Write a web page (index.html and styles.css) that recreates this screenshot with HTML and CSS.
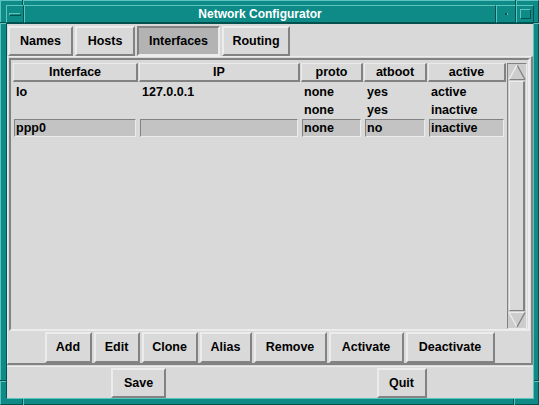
FILE: index.html
```html
<!DOCTYPE html>
<html>
<head>
<meta charset="utf-8">
<title>Network Configurator</title>
<link rel="stylesheet" href="styles.css">
</head>
<body>
<div class="window">
  <span class="mark vmark m-top-l"></span>
  <span class="mark vmark m-top-r"></span>
  <span class="mark vmark m-bot-l"></span>
  <span class="mark vmark m-bot-r"></span>
  <span class="mark hmark m-left-t"></span>
  <span class="mark hmark m-right-t"></span>
  <span class="mark hmark m-left-b"></span>
  <span class="mark hmark m-right-b"></span>

  <div class="titlebar">
    <div class="tb tb-menu"><span class="menu-bar"></span></div>
    <div class="tb tb-title">Network Configurator</div>
    <div class="tb tb-min"><span class="min-dot"></span></div>
    <div class="tb tb-max"><span class="max-sq"></span></div>
  </div>

  <div class="client">
    <div class="tabs">
      <div class="btn tab-names">Names</div>
      <div class="btn tab-hosts">Hosts</div>
      <div class="btn tab-ifaces selected">Interfaces</div>
      <div class="btn tab-routing">Routing</div>
    </div>

    <div class="panel">
      <div class="list-frame">
        <div class="table">
          <div class="th">Interface</div>
          <div class="th">IP</div>
          <div class="th">proto</div>
          <div class="th">atboot</div>
          <div class="th">active</div>

          <div class="td">lo</div>
          <div class="td">127.0.0.1</div>
          <div class="td">none</div>
          <div class="td">yes</div>
          <div class="td">active</div>

          <div class="td"></div>
          <div class="td"></div>
          <div class="td">none</div>
          <div class="td">yes</div>
          <div class="td">inactive</div>

          <div class="td field">ppp0</div>
          <div class="td field"></div>
          <div class="td field">none</div>
          <div class="td field">no</div>
          <div class="td field">inactive</div>
        </div>
        <div class="scrollbar">
          <svg class="arrow" width="18" height="17" viewBox="0 0 18 17">
            <line x1="1" y1="15.5" x2="17" y2="15.5" stroke="#828282" stroke-width="1"/>
            <line x1="9" y1="1" x2="17" y2="15.5" stroke="#828282" stroke-width="1.4"/>
            <line x1="1" y1="15.5" x2="9" y2="1" stroke="#ececec" stroke-width="1.4"/>
          </svg>
          <div class="slider"></div>
          <svg class="arrow" width="18" height="17" viewBox="0 0 18 17">
            <line x1="1" y1="1.5" x2="17" y2="1.5" stroke="#ececec" stroke-width="1"/>
            <line x1="1" y1="1.5" x2="9" y2="16" stroke="#ececec" stroke-width="1.4"/>
            <line x1="17" y1="1.5" x2="9" y2="16" stroke="#828282" stroke-width="1.4"/>
          </svg>
        </div>
      </div>
      <div class="actions">
        <div class="btn b-add">Add</div>
        <div class="btn b-edit">Edit</div>
        <div class="btn b-clone">Clone</div>
        <div class="btn b-alias">Alias</div>
        <div class="btn b-remove">Remove</div>
        <div class="btn b-activate">Activate</div>
        <div class="btn b-deactivate">Deactivate</div>
      </div>
    </div>

    <div class="footer">
      <div class="footer-cell"><div class="btn b-save">Save</div></div>
      <div class="footer-cell"><div class="btn b-quit">Quit</div></div>
    </div>
  </div>
</div>
</body>
</html>
```

FILE: styles.css
```css
* { box-sizing: border-box; }

html, body {
  margin: 0;
  padding: 0;
}

body {
  width: 539px;
  height: 405px;
  overflow: hidden;
  background: #0e8b87;
  font-family: "Liberation Sans", Arial, sans-serif;
  font-weight: bold;
  font-size: 12.5px;
  color: #000;
}

/* ---------- window frame ---------- */
.window {
  position: relative;
  width: 539px;
  height: 405px;
  background: #0e8b87;
  border: 1px solid;
  border-color: #5cc3be #02514e #02514e #5cc3be;
  padding: 4px 4px 5px 5px;
  display: flex;
  flex-direction: column;
}

.mark { position: absolute; }
.vmark {
  width: 2px;
  border-left: 1px solid #02514e;
  border-right: 1px solid #5cc3be;
}
.hmark {
  height: 2px;
  border-top: 1px solid #02514e;
  border-bottom: 1px solid #5cc3be;
}
.m-top-l  { left: 21px;  top: -1px; height: 5px; }
.m-top-r  { left: 514px; top: -1px; height: 5px; }
.m-bot-l  { left: 21px;  bottom: -1px; height: 6px; }
.m-bot-r  { left: 512px; bottom: -1px; height: 6px; }
.m-left-t { top: 21px;  left: -1px; width: 6px; }
.m-right-t{ top: 21px;  right: -1px; width: 5px; }
.m-left-b { top: 379px; left: -1px; width: 6px; }
.m-right-b{ top: 379px; right: -1px; width: 5px; }

/* ---------- title bar ---------- */
.titlebar {
  display: flex;
  height: 18px;
  flex: none;
}
.tb {
  border: 1px solid;
  border-color: #5cc3be #02514e #02514e #5cc3be;
  background: #0e8b87;
  display: flex;
  align-items: center;
  justify-content: center;
}
.tb-menu { width: 18px; }
.tb-title {
  flex: 1;
  color: #fff;
  font-size: 12px;
  line-height: 16px;
}
.tb-min { width: 20px; }
.tb-max { width: 18px; }

.menu-bar {
  width: 12px;
  height: 3px;
  border: 1px solid;
  border-color: #5cc3be #02514e #02514e #5cc3be;
}
.min-dot {
  width: 2px;
  height: 2px;
  background: #02514e;
  border-right: 1px solid #5cc3be;
  box-sizing: content-box;
}
.max-sq {
  width: 11px;
  height: 10px;
  border: 1px solid;
  border-color: #5cc3be #02514e #02514e #5cc3be;
}

/* ---------- client area ---------- */
.client {
  flex: 1;
  background: #d9d9d9;
  border: 1px solid;
  border-color: #02514e #5cc3be #5cc3be #02514e;
  display: flex;
  flex-direction: column;
}

.btn {
  border: 2px solid;
  border-color: #ececec #828282 #828282 #ececec;
  background: #d9d9d9;
  display: flex;
  align-items: center;
  justify-content: center;
  white-space: nowrap;
  padding-bottom: 1px;
}

/* tabs */
.tabs {
  display: flex;
  gap: 2px;
  padding: 2px 0 0 1px;
  height: 32px;
  flex: none;
}
.tabs .btn { height: 30px; }
.tab-names   { width: 65px; }
.tab-hosts   { width: 60px; }
.tab-ifaces  { width: 83px; }
.tab-routing { width: 68px; }
.btn.selected {
  background: #b3b3b3;
  border-color: #828282 #ececec #ececec #828282;
}

/* main panel */
.panel {
  height: 309px;
  flex: none;
  border-style: solid;
  border-width: 1px 2px 2px 1px;
  border-color: #ececec #828282 #828282 #ececec;
  padding: 1px 1px 0 1px;
  display: flex;
  flex-direction: column;
}

.list-frame {
  height: 273px;
  flex: none;
  border: 2px solid;
  border-color: #828282 #ececec #ececec #828282;
  padding: 3px 1px 0 2px;
  display: flex;
  gap: 1px;
}

.table {
  flex: 1;
  display: grid;
  grid-template-columns: 125px 161px 62px 63px 78px;
  grid-template-rows: 20px 18px 18px 18px;
  column-gap: 1px;
  align-content: start;
}

.th {
  height: 19px;
  border-style: solid;
  border-width: 1px 2px 2px 1px;
  border-color: #ececec #828282 #828282 #ececec;
  display: flex;
  align-items: center;
  justify-content: center;
  line-height: 15px;
}

.td {
  height: 18px;
  margin: 0 2px 0 1px;
  border: 1px solid transparent;
  padding: 0 1px;
  line-height: 16px;
  white-space: nowrap;
}
.td.field {
  background: #c3c3c3;
  border-color: #828282 #ececec #ececec #828282;
}

/* scrollbar */
.scrollbar {
  width: 20px;
  flex: none;
  border: 1px solid;
  border-color: #828282 #ececec #ececec #828282;
  background: #cdcdcd;
  display: flex;
  flex-direction: column;
}
.arrow {
  display: block;
  flex: none;
}
.slider {
  flex: 1;
  margin: 0 1px;
  background: #d9d9d9;
  border: 1px solid;
  border-color: #ececec #828282 #828282 #ececec;
  border-width: 1px 2px 1px 1px;
}

/* action buttons */
.actions {
  height: 32px;
  flex: none;
  padding-top: 1px;
  display: flex;
  justify-content: center;
  gap: 2px;
}
.actions .btn { height: 31px; }
.b-add        { width: 47px; }
.b-edit       { width: 46px; }
.b-clone      { width: 56px; }
.b-alias      { width: 52px; }
.b-remove     { width: 73px; }
.b-activate   { width: 75px; }
.b-deactivate { width: 89px; }

/* footer */
.footer {
  flex: 1;
  margin-top: 1px;
  border-top: 1px solid #ececec;
  padding-top: 1px;
  display: grid;
  grid-template-columns: 1fr 1fr;
}
.footer-cell {
  display: flex;
  justify-content: center;
  align-items: flex-start;
}
.footer .btn { height: 30px; }
.b-save { width: 55px; }
.b-quit { width: 50px; }
```
